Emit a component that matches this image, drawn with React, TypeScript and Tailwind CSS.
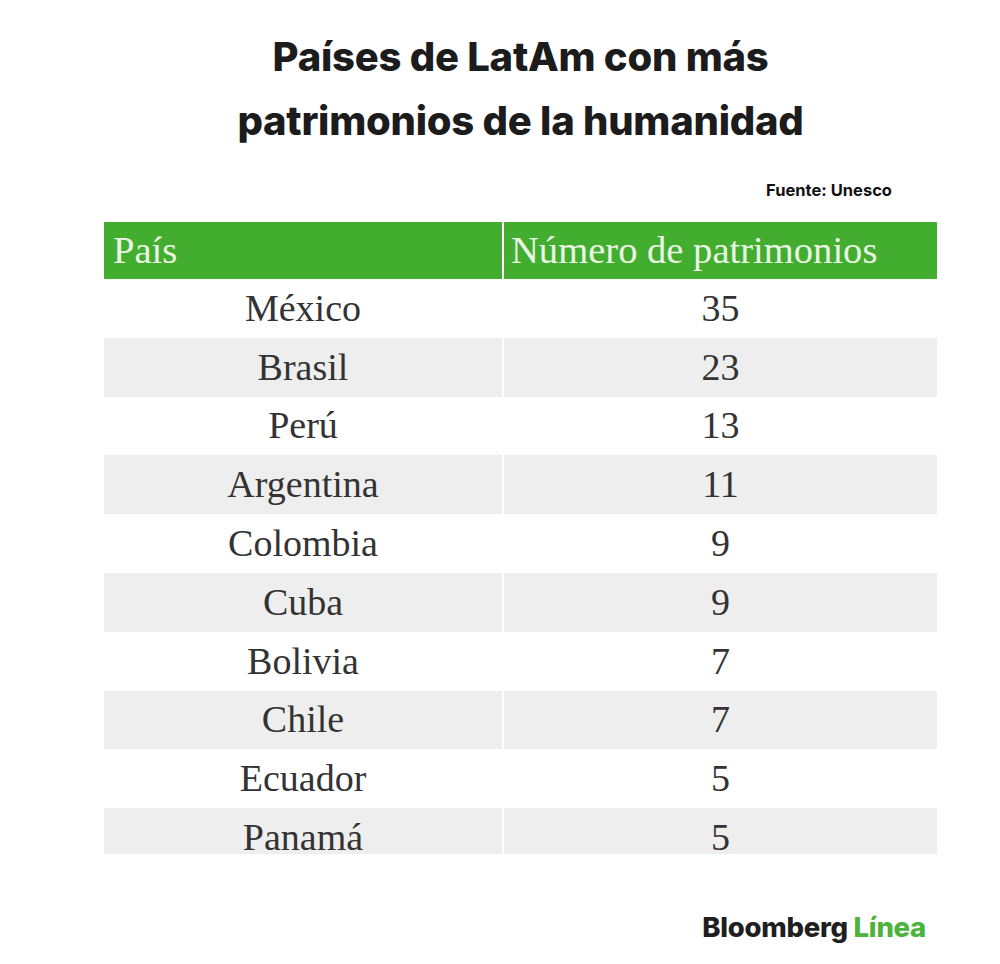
const rows = [
  { pais: "México", n: 35 },
  { pais: "Brasil", n: 23 },
  { pais: "Perú", n: 13 },
  { pais: "Argentina", n: 11 },
  { pais: "Colombia", n: 9 },
  { pais: "Cuba", n: 9 },
  { pais: "Bolivia", n: 7 },
  { pais: "Chile", n: 7 },
  { pais: "Ecuador", n: 5 },
  { pais: "Panamá", n: 5 },
];

export default function App() {
  return (
    <div className="w-[1000px] h-[964px] bg-white overflow-hidden">
      <div className="ml-[104px] w-[833px] flex flex-col">
        {/* Title */}
        <h1 className="pt-[25px] text-center text-[40px] leading-[64px] font-extrabold tracking-[-0.006em] text-[#1c1c1c] font-['Inter',sans-serif]">
          Países de LatAm con más
          <br />
          patrimonios de la humanidad
        </h1>

        <p className="mt-[27px] pr-[45px] text-right text-[16.5px] leading-[20px] font-bold text-[#111] font-['Inter',sans-serif]">
          Fuente: Unesco
        </p>

        {/* Table */}
        <div className="mt-[22px] font-['Liberation_Serif',serif] text-[38px]">
          <div className="flex h-[57px] bg-[#43ad30] text-[#eaf6e4] text-[38.6px]">
            <div className="w-[400px] flex items-center pl-[9px] border-r-2 border-white">País</div>
            <div className="flex-1 flex items-center pl-[7px]">Número de patrimonios</div>
          </div>
          {rows.slice(0, -1).map((r, i) => (
            <div
              key={r.pais}
              className={`flex h-[58.8px] text-[#333] ${i % 2 === 1 ? "bg-[#eeeeee]" : "bg-white"}`}
            >
              <div className="w-[400px] flex items-center justify-center border-r-2 border-white">
                {r.pais}
              </div>
              <div className="flex-1 flex items-center justify-center">{r.n}</div>
            </div>
          ))}
          {/* last row is cut short in the original */}
          <div className="flex h-[46px] bg-[#eeeeee] text-[#333] leading-[34px]">
            <div className="w-[400px] pt-[12px] text-center border-r-2 border-white">Panamá</div>
            <div className="flex-1 pt-[12px] text-center">5</div>
          </div>
        </div>

        {/* Logo */}
        <div className="mt-[57px] pr-[11px] text-right text-[27.5px] leading-[32px] font-extrabold tracking-[-0.01em] font-['Inter',sans-serif]">
          <span className="text-[#1f1f1f]">Bloomberg</span>{" "}
          <span className="text-[#4cb33c]">Línea</span>
        </div>
      </div>
    </div>
  );
}
